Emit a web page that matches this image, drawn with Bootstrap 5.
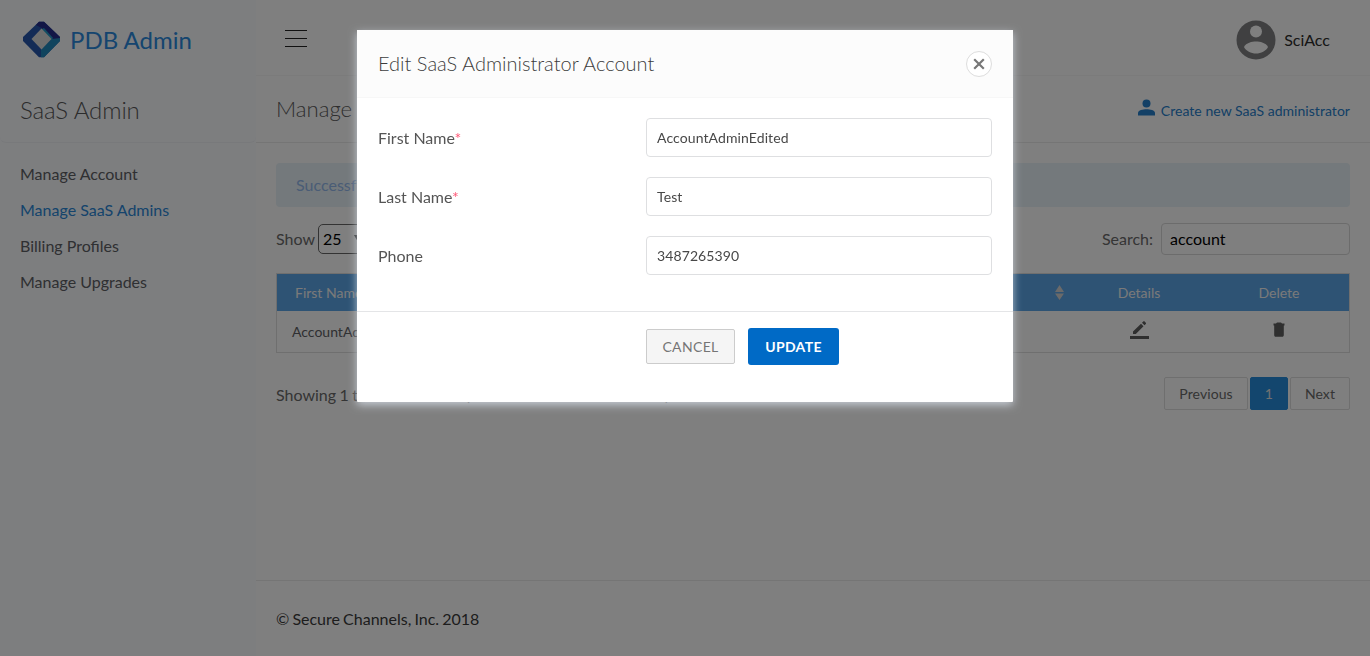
<!DOCTYPE html>
<html lang="en">
<head>
<meta charset="utf-8">
<meta name="viewport" content="width=device-width, initial-scale=1">
<title>PDB Admin</title>
<link href="https://cdn.jsdelivr.net/npm/bootstrap@5.3.0/dist/css/bootstrap.min.css" rel="stylesheet">
<style>
body{font-family:Lato,"Liberation Sans",sans-serif;font-size:16px;line-height:20px;color:#6a6a6a;background:#fff;overflow:hidden}
a{text-decoration:none}
.sidebar{width:256px;background:#fafcff}
.brand{height:76px;gap:9px;padding:3px 0 0 22px;font-size:24px;color:#2b8ade}
.side-title{height:67px;padding:2px 20px 0;font-size:24px;line-height:64px;font-weight:300;color:#585858;letter-spacing:-.1px;border-bottom:1px solid #f1f3f6;border-radius:0 0 6px 6px}
.side-menu{padding:13px 20px}
.side-menu a{height:36px;line-height:36px;color:#5e6064}
.side-menu a.active{color:#2b88d8}
.topbar{height:75px;padding:4px 40px 0 29px}
.user-name{color:#2c2c2c}
.titlebar{height:68px;padding:0 20px;border-top:1px solid #f7f7f7;border-bottom:1px solid #ebebeb}
.titlebar h1{font-size:22.2px;line-height:66px;font-weight:300;color:#5c5c5c}
.create{font-size:14px;color:#2680cc;letter-spacing:.04px}
.create svg{margin-right:5px}
.create span{padding-top:3px}
.content{padding:0 20px}
.notice{margin-top:20px;height:44px;padding:0 20px;line-height:44px;background:#e8f2f8;color:#94b9ec;border-radius:4px}
.tools{margin-top:16px;height:32px}
.len{width:50px;height:30px;margin-left:3px;border:1px solid #666;border-radius:5px;padding:0 4px;color:#000}
.find{width:189px;height:32px;border:1px solid #d8d8d8;border-radius:4px;padding:0 8px 2px;color:#000;font-size:16px;background:#fff}
.grid-box{margin-top:18px;height:80px;border:1px solid #dedede;font-size:14px}
.grid-head{height:37px;background:#5ca6e8;color:#f4f4f4}
.grid-row{height:41px;color:#5e6064}
.c-name{width:660px;padding-left:15px}
.grid-head .c-name{padding-left:18px}
.c-act{width:140px}
.c-act svg{display:block;margin:-4px auto 0}
.sorter{margin-right:5px}
.summary{padding-top:8px;word-spacing:-.6px}
.pager-box{gap:2px;font-size:14px;letter-spacing:.08px}
.pager-box a{height:33px;border:1px solid #dedede;line-height:31px;color:#6a6a6a;padding:0 14px;border-radius:2px}
.pager-box a.on{background:#268cdc;border-color:#268cdc;color:#e2e2e2}
.foot{height:76px;padding:0 20px;line-height:76px;border-top:1px solid #ebebeb;color:#3a3a3a;word-spacing:-1px}
.dialog-box{width:656px;max-width:656px;margin:30px 0 0 357px}
.dialog-box .modal-content{height:372px;border:0;border-radius:0 0 1px 1px;box-shadow:0 3px 9px rgba(222,230,240,.75);color:#555}
.dialog-box .modal-header{height:68px;padding:0 21px;background:#fcfcfc;border-bottom:1px solid #f7f7f7;border-radius:0}
.dialog-box h2{font-size:20px;font-weight:300;color:#3c3c3c;padding-bottom:2px}
.x-btn{width:26px;height:26px;border:1px solid #ddd;border-radius:50%;background:#fff}
.dialog-box .modal-body{padding:20px 21px 0;flex:none;height:213px}
.field{height:39px;margin-bottom:20px}
.field label{width:268px}
.field label i{font-style:normal;color:#ff5876}
.field .form-control{flex:1;height:39px;border:1px solid #dedfe1;border-radius:4px;padding:0 10px;font-size:14px;color:#484848;letter-spacing:.1px}
.actions{border-top:1px solid #e4e5e7;padding:16px 0 0 289px;gap:13px;height:91px}
.b-cancel,.b-update{font-size:14px;padding:0;border-radius:2px;letter-spacing:.35px}
.b-cancel{width:89px;height:35px;margin-top:1px;border:1px solid #ccc;background:#f5f5f5;color:#757575}
.b-update{width:91px;height:37px;font-weight:700;border:0;background:#006ac6;color:#fff;border-radius:3px}
</style>
</head>
<body>
<div class="d-flex vh-100">
  <aside class="sidebar flex-shrink-0">
    <a class="brand d-flex align-items-center" href="#">
      <svg width="39" height="37" viewBox="0 0 39 37"><path d="M17 .8h5L38 16v4L22 36.200h-5L1 20v-4z" fill="#2657ac"/><path d="M17 .8h5L38 16v3L31 20 19.500 7 14 4z" fill="#252c8c"/><path d="M38 17v3L22 36.200h-3l0-8.200L30 18z" fill="#2189bc"/><path d="M22 7l9 10-2 2.500-10-11z" fill="#2498c4"/><path d="M19.500 7.500 29.500 18 19.500 28.500 9.500 18z" fill="#dcdcdc"/></svg>
      <span>PDB Admin</span>
    </a>
    <div class="side-title">SaaS Admin</div>
    <nav class="side-menu d-flex flex-column">
      <a href="#">Manage Account</a><a class="active" href="#">Manage SaaS Admins</a><a href="#">Billing Profiles</a><a href="#">Manage Upgrades</a>
    </nav>
  </aside>
  <main class="flex-grow-1 d-flex flex-column">
    <header class="topbar d-flex align-items-center justify-content-between">
      <svg class="mb-1" width="22" height="20" viewBox="0 0 22 20" stroke="#222" stroke-width="1"><path d="M0 2.500h22M0 10.500h22M0 18.500h22"/></svg>
      <div class="d-flex align-items-center gap-2">
        <svg width="40" height="40" viewBox="0 0 40 40"><circle cx="20" cy="20" r="19.500" fill="#808182"/><circle cx="20" cy="11.500" r="6" fill="#fff"/><path d="M8 27c2-4.400 8-5.600 12-5.600S30 22.600 32 27c-2 4-7 6.500-12 6.500S10 31 8 27z" fill="#fff"/></svg>
        <span class="user-name">SciAcc</span>
      </div>
    </header>
    <div class="titlebar d-flex align-items-center justify-content-between">
      <h1 class="m-0">Manage SaaS Admins</h1>
      <a class="create d-flex align-items-center" href="#">
        <svg class="mb-1" width="19" height="17" viewBox="0 0 19 17" fill="currentColor"><circle cx="9.500" cy="4.500" r="4"/><path d="M1 16.500V14c0-3 5-3.800 8.500-3.800S18 11 18 14v2.500z"/></svg>
        <span>Create new SaaS administrator</span>
      </a>
    </div>
    <section class="content flex-grow-1">
      <div class="notice">Successfully</div>
      <div class="tools d-flex justify-content-between">
        <div class="d-flex align-items-center"><span>Show</span><span class="len d-flex align-items-center justify-content-between"><span>25</span><svg width="10" height="8"><path d="M1 0h8L5 7z" fill="#444"/></svg></span></div>
        <div class="d-flex align-items-center gap-2"><span>Search:</span><input class="find" value="account"></div>
      </div>
      <div class="grid-box">
        <div class="grid-head d-flex align-items-center">
          <div class="c-name">First Name</div>
          <div class="flex-grow-1 d-flex justify-content-end"><svg class="sorter" width="9" height="15" viewBox="0 0 9 15" fill="#d4d4d4"><path d="M4.500 0 9 7H0zM0 8.500h9L4.500 15z"/></svg></div>
          <div class="c-act text-center">Details</div>
          <div class="c-act text-center">Delete</div>
        </div>
        <div class="grid-row d-flex align-items-center">
          <div class="c-name">AccountAdminEdited</div>
          <div class="flex-grow-1"></div>
          <div class="c-act"><svg width="19" height="18" viewBox="0 0 19 18" fill="#5e5e5e"><path d="M0 15h19v3H0zM3 10.500 11 2.700 13.500 5.200 5.800 13H3zM12 1.700 13.500.3h.9L16 2v.8L14.500 4.200z"/></svg></div>
          <div class="c-act"><svg width="12" height="16" viewBox="0 0 12 16" fill="#5e5e5e"><path d="M.5 1.500H3l1-1h4l1 1h2.500v2H.5zM1.200 3.500h9.600V13c0 1-.6 1.800-1.500 1.800H2.700C1.800 14.800 1.200 14 1.200 13z"/></svg></div>
        </div>
      </div>
      <div class="d-flex justify-content-between mt-4">
        <div class="summary">Showing 1 to 1 of 1 entries (filtered from 28 total entries)</div>
        <div class="pager-box d-flex"><a href="#">Previous</a><a class="on" href="#">1</a><a href="#">Next</a></div>
      </div>
    </section>
    <footer class="foot">© Secure Channels, Inc. 2018</footer>
  </main>
</div>
<div class="modal-backdrop show"></div>
<div class="modal d-block">
  <div class="modal-dialog dialog-box">
    <div class="modal-content">
      <div class="modal-header d-flex align-items-center justify-content-between">
        <h2 class="m-0">Edit SaaS Administrator Account</h2>
        <button class="x-btn d-flex align-items-center justify-content-center p-0"><svg width="12" height="12" viewBox="0 0 12 12" stroke="#777" stroke-width="2.200"><path d="M1.200 1.200l9.600 9.600M10.800 1.200l-9.600 9.600"/></svg></button>
      </div>
      <div class="modal-body">
        <div class="field d-flex align-items-center"><label>First Name<i>*</i></label><input class="form-control" value="AccountAdminEdited"></div>
        <div class="field d-flex align-items-center"><label>Last Name<i>*</i></label><input class="form-control" value="Test"></div>
        <div class="field d-flex align-items-center"><label>Phone</label><input class="form-control" value="3487265390"></div>
      </div>
      <div class="actions d-flex align-items-start">
        <button class="btn b-cancel">CANCEL</button>
        <button class="btn b-update">UPDATE</button>
      </div>
    </div>
  </div>
</div>
<script src="https://cdn.jsdelivr.net/npm/bootstrap@5.3.0/dist/js/bootstrap.bundle.min.js"></script>
</body>
</html>
